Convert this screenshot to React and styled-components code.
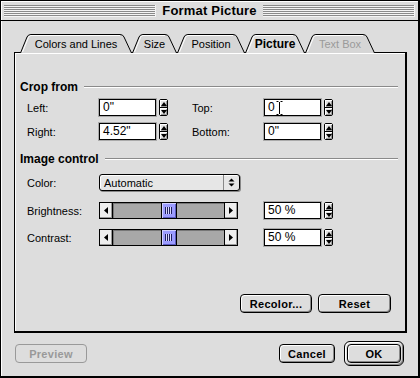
import React from 'react';
import styled, { createGlobalStyle } from 'styled-components';

const Global = createGlobalStyle`
  html, body { margin: 0; padding: 0; background: #dddddd; }
  * { box-sizing: border-box; }
`;

const tabs = [
  { label: 'Colors and Lines', width: 112 },
  { label: 'Size', width: 45 },
  { label: 'Position', width: 68 },
  { label: 'Picture', width: 60, active: true },
  { label: 'Text Box', width: 70, disabled: true },
];

const TabShape = ({ width, active }) => (
  <TabSvg width={width} height={19} viewBox={`0 0 ${width} 19`}>
    <path
      d={`M0.5 19 L7 3 Q8 0.5 11 0.5 L${width - 12} 0.5 Q${width - 9} 0.5 ${width - 8} 3 L${width - 0.5} 19`}
      fill={active ? '#dddddd' : '#d6d6d6'}
      stroke="#000"
      strokeWidth="1"
    />
    <path
      d={`M2.5 18 L8.5 3.5 Q9.5 1.5 11 1.5 L${width - 12} 1.5`}
      fill="none"
      stroke="#fff"
      strokeWidth="1"
    />
  </TabSvg>
);

const Arrows = ({ size = 9 }) => (
  <svg width={7} height={size} viewBox="0 0 7 9">
    <path d="M3.5 0.5 L6.5 3.5 L0.5 3.5 Z" fill="#000" />
    <path d="M0.5 5.5 L6.5 5.5 L3.5 8.5 Z" fill="#000" />
  </svg>
);

const IBeam = () => (
  <svg width="7" height="14" viewBox="0 0 7 14" style={{ marginLeft: 1 }}>
    <path d="M0.5 0.5 H2.5 M4.5 0.5 H6.5 M3.5 1 V13 M0.5 13.5 H2.5 M4.5 13.5 H6.5" stroke="#000" strokeWidth="1" fill="none" />
  </svg>
);

const Spinner = () => (
  <Spin>
    <SpinHalf>
      <svg width="6" height="4" viewBox="0 0 6 4"><path d="M3 0 L6 4 L0 4 Z" fill="#000" /></svg>
    </SpinHalf>
    <SpinHalf $bottom>
      <svg width="6" height="4" viewBox="0 0 6 4"><path d="M0 0 L6 0 L3 4 Z" fill="#000" /></svg>
    </SpinHalf>
  </Spin>
);

const Field = ({ value, cursor }) => (
  <FieldWrap>
    <Input>{value}{cursor && <IBeam />}</Input>
    <Spinner />
  </FieldWrap>
);

const Slider = () => (
  <SliderBox>
    <SliderArrow>
      <svg width="4" height="7" viewBox="0 0 4 7"><path d="M4 0 L0 3.5 L4 7 Z" fill="#000" /></svg>
    </SliderArrow>
    <Track>
      <Thumb><Grip /></Thumb>
    </Track>
    <SliderArrow $right>
      <svg width="4" height="7" viewBox="0 0 4 7"><path d="M0 0 L4 3.5 L0 7 Z" fill="#000" /></svg>
    </SliderArrow>
  </SliderBox>
);

const App = () => {
  return (
    <>
      <Global />
      <Window>
        <TitleBar>
          <Stripes />
          <Title>Format Picture</Title>
          <Stripes />
        </TitleBar>
        <Body>
          <TabRow>
            {tabs.map((t) => (
              <Tab key={t.label} $width={t.width} $active={t.active} $disabled={t.disabled}>
                <TabShape width={t.width} active={t.active} />
                <TabLabel $active={t.active} $disabled={t.disabled}>{t.label}</TabLabel>
              </Tab>
            ))}
          </TabRow>
          <Panel>
            <Heading $first>Crop from<Rule /></Heading>
            <CropGrid>
              <Label>Left:</Label>
              <Field value={'0"'} />
              <Label>Top:</Label>
              <Field value={'0'} cursor />
              <Label>Right:</Label>
              <Field value={'4.52"'} />
              <Label>Bottom:</Label>
              <Field value={'0"'} />
            </CropGrid>
            <Heading>Image control<Rule /></Heading>
            <Row $top={8}>
              <Label>Color:</Label>
              <Popup>
                <PopupText>Automatic</PopupText>
                <PopupArrows><Arrows /></PopupArrows>
              </Popup>
            </Row>
            <Row $top={11}>
              <Label>Brightness:</Label>
              <Slider />
              <Gap />
              <Field value="50 %" />
            </Row>
            <Row $top={10}>
              <Label>Contrast:</Label>
              <Slider />
              <Gap />
              <Field value="50 %" />
            </Row>
            <PanelButtons>
              <Button $width={72}>Recolor...</Button>
              <Button $width={73}>Reset</Button>
            </PanelButtons>
          </Panel>
          <Footer>
            <Button $width={72} $disabled>Preview</Button>
            <Spacer />
            <Button $width={56}>Cancel</Button>
            <DefaultRing>
              <Button $width={54}>OK</Button>
            </DefaultRing>
          </Footer>
        </Body>
      </Window>
    </>
  );
};

export default App;

const Window = styled.div`
  width: 420px;
  height: 378px;
  background: #dddddd;
  border: 1px solid #000;
  border-right-width: 2px;
  border-bottom-width: 2px;
  display: flex;
  flex-direction: column;
  font-family: "Liberation Sans", Arial, sans-serif;
  color: #000;
`;

const TitleBar = styled.div`
  height: 20px;
  display: flex;
  align-items: center;
  gap: 6px;
  padding: 0 3px;
  background: #dddddd;
  border-bottom: 1px solid #000;
  box-shadow: inset 1px 1px 0 #fff;
`;

const Stripes = styled.div`
  flex: 1;
  height: 12px;
  background: repeating-linear-gradient(to bottom, #8a8a8a 0 1px, #f4f4f4 1px 2px);
  border-right: 1px solid #f4f4f4;
`;

const Title = styled.div`
  font-weight: bold;
  font-size: 13px;
  letter-spacing: 0.2px;
`;

const Body = styled.div`
  flex: 1;
  display: flex;
  flex-direction: column;
  padding: 13px 11px 0 13px;
  box-shadow: inset 1px 0 0 #fff;
`;

const TabRow = styled.div`
  display: flex;
  height: 19px;
  padding-left: 6px;
  position: relative;
  z-index: 1;
  margin-bottom: -1px;
`;

const Tab = styled.div`
  position: relative;
  width: ${(p) => p.$width}px;
  height: 19px;
  display: flex;
  align-items: center;
  justify-content: center;
`;

const TabSvg = styled.svg`
  position: absolute;
  left: 0;
  top: 0;
`;

const TabLabel = styled.span`
  position: relative;
  font-size: ${(p) => (p.$active ? '12px' : '11px')};
  font-weight: ${(p) => (p.$active ? 'bold' : 'normal')};
  color: ${(p) => (p.$disabled ? '#9a9a9a' : '#000')};
`;

const Panel = styled.div`
  width: 393px;
  height: 281px;
  border: 1px solid #000;
  border-right-width: 2px;
  border-bottom-width: 2px;
  background: #dddddd;
  box-shadow: inset 1px 1px 0 #fff;
  display: flex;
  flex-direction: column;
  padding: 27px 7px 0 5px;
`;

const Heading = styled.div`
  display: flex;
  align-items: center;
  gap: 6px;
  height: 14px;
  font-weight: bold;
  font-size: 12px;
  margin-top: ${(p) => (p.$first ? 0 : 12)}px;
`;

const Rule = styled.div`
  flex: 1;
  height: 2px;
  border-top: 1px solid #8a8a8a;
  border-bottom: 1px solid #fff;
`;

const CropGrid = styled.div`
  display: grid;
  grid-template-columns: 72px 93px 72px auto;
  row-gap: 7px;
  align-items: center;
  margin-top: 5px;
  padding-left: 7px;
`;

const Row = styled.div`
  display: flex;
  align-items: center;
  height: 17px;
  padding-left: 7px;
  margin-top: ${(p) => p.$top}px;
`;

const Label = styled.div`
  width: 72px;
  font-size: 11px;
`;

const Gap = styled.div`
  width: 26px;
`;

const FieldWrap = styled.div`
  display: flex;
  align-items: center;
  gap: 3px;
`;

const Input = styled.div`
  width: 57px;
  height: 17px;
  background: #fff;
  border: 1px solid #000;
  box-shadow: 0 0 0 1px #aaa;
  font-size: 12px;
  line-height: 15px;
  padding-left: 3px;
  display: flex;
  align-items: center;
`;

const Spin = styled.div`
  width: 9px;
  height: 17px;
  border: 1px solid #000;
  border-radius: 2px;
  background: #e4e4e4;
  display: flex;
  flex-direction: column;
`;

const SpinHalf = styled.div`
  flex: 1;
  display: flex;
  align-items: center;
  justify-content: center;
  border-top: ${(p) => (p.$bottom ? '1px solid #000' : 'none')};
  box-shadow: inset 1px 1px 0 #fff, inset -1px -1px 0 #999;
`;

const Popup = styled.div`
  width: 141px;
  height: 17px;
  border: 1px solid #000;
  border-radius: 3px;
  background: #e6e6e6;
  box-shadow: inset 1px 1px 0 #fff, 1px 1px 0 #888;
  display: flex;
  align-items: center;
`;

const PopupText = styled.div`
  flex: 1;
  font-size: 11px;
  padding-left: 4px;
`;

const PopupArrows = styled.div`
  width: 16px;
  height: 15px;
  border-left: 1px solid #888;
  display: flex;
  align-items: center;
  justify-content: center;
`;

const SliderBox = styled.div`
  width: 139px;
  height: 17px;
  border: 1px solid #000;
  display: flex;
  background: #aaa;
`;

const SliderArrow = styled.div`
  width: 13px;
  background: #eee;
  display: flex;
  align-items: center;
  justify-content: center;
  border-left: ${(p) => (p.$right ? '1px solid #000' : 'none')};
  border-right: ${(p) => (p.$right ? 'none' : '1px solid #000')};
  box-shadow: inset -1px -1px 0 #999;
`;

const Track = styled.div`
  flex: 1;
  display: flex;
  justify-content: center;
  background: #a8a8a8;
  box-shadow: inset 0 1px 0 #777, inset 1px 0 0 #777;
`;

const Thumb = styled.div`
  width: 16px;
  background: #9c9cff;
  border-left: 1px solid #000;
  border-right: 1px solid #000;
  display: flex;
  align-items: center;
  justify-content: center;
  box-shadow: inset 1px 1px 0 #d0d0ff, inset -1px -1px 0 #5a5ac0;
`;

const Grip = styled.div`
  width: 7px;
  height: 7px;
  background: repeating-linear-gradient(to right, #202060 0 1px, #d8d8ff 1px 2px);
`;

const PanelButtons = styled.div`
  margin-top: auto;
  display: flex;
  justify-content: flex-end;
  gap: 6px;
  padding: 0 7px 18px 0;
`;

const Button = styled.div`
  width: ${(p) => p.$width}px;
  height: 19px;
  border: 1px solid ${(p) => (p.$disabled ? '#999' : '#000')};
  border-radius: 4px;
  background: #dddddd;
  box-shadow: ${(p) => (p.$disabled ? 'none' : 'inset 1px 1px 0 #fff, inset -1px -1px 0 #888')};
  display: flex;
  align-items: center;
  justify-content: center;
  font-size: 11px;
  font-weight: bold;
  letter-spacing: 0.3px;
  color: ${(p) => (p.$disabled ? '#999' : '#000')};
`;

const Footer = styled.div`
  display: flex;
  align-items: center;
  margin-top: 8px;
  padding-left: 1px;
  padding-right: 3px;
`;

const Spacer = styled.div`
  flex: 1;
`;

const DefaultRing = styled.div`
  margin-left: 9px;
  padding: 2px;
  border: 1px solid #000;
  border-radius: 6px;
  background: #dddddd;
  box-shadow: inset 1px 1px 0 #fff, inset -1px -1px 0 #888;
`;
